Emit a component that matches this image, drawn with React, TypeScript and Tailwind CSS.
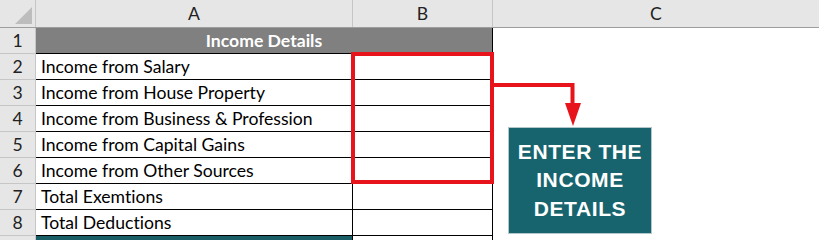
import React from 'react';

const rows = [
  'Income from Salary',
  'Income from House Property',
  'Income from Business & Profession',
  'Income from Capital Gains',
  'Income from Other Sources',
  'Total Exemtions',
  'Total Deductions',
];

function RowNum({ n }: { n?: number }) {
  return (
    <div className="w-[36px] shrink-0 flex items-center justify-center bg-[#e6e6e6] border-r border-b border-[#c6c6c6] text-[#222]">
      {n}
    </div>
  );
}

export default function App() {
  return (
    <div className="relative w-[819px] h-[240px] overflow-hidden bg-white font-['Lato',sans-serif] text-[17.6px] text-black leading-none [font-variant-ligatures:none]">
      {/* column headers */}
      <div className="flex h-[28px] bg-[#e6e6e6] border-b border-[#9d9d9d]">
        <div className="relative w-[36px] shrink-0 border-r border-[#c6c6c6]">
          <svg className="absolute right-[3px] bottom-[3px]" width="17" height="17" viewBox="0 0 17 17">
            <polygon points="17,0 17,17 0,17" fill="#bdbdbd" />
          </svg>
        </div>
        <div className="w-[317px] shrink-0 flex items-center justify-center border-r border-[#c6c6c6] text-[#222]">A</div>
        <div className="w-[140px] shrink-0 flex items-center justify-center border-r border-[#c6c6c6] text-[#222]">B</div>
        <div className="flex-1 flex items-center justify-center text-[#222]">C</div>
      </div>

      {/* row 1 */}
      <div className="flex h-[26px]">
        <RowNum n={1} />
        <div className="w-[457px] shrink-0 flex items-center justify-center bg-[#808080] border-r border-b border-black text-white font-bold">
          Income Details
        </div>
        <div className="flex-1" />
      </div>

      {rows.map((label, i) => (
        <div key={label} className="flex h-[26px]">
          <RowNum n={i + 2} />
          <div className="w-[317px] shrink-0 flex items-center pl-[5px] border-r border-b border-black">{label}</div>
          <div className="w-[140px] shrink-0 border-r border-b border-black" />
          <div className="flex-1" />
        </div>
      ))}

      {/* row 9, only its top edge is visible */}
      <div className="flex h-[26px]">
        <RowNum />
        <div className="w-[317px] shrink-0 bg-[#1b5f66] border-r border-black" />
        <div className="w-[140px] shrink-0 border-r border-black" />
        <div className="flex-1" />
      </div>

      {/* highlight around B2:B6 */}
      <div className="absolute left-[351px] top-[52px] w-[143px] h-[132px] border-[4px] border-[#e8141b]" />

      {/* connector arrow */}
      <svg className="absolute left-0 top-0" width="819" height="240">
        <polyline points="494,85 572.5,85 572.5,106" fill="none" stroke="#e8141b" strokeWidth="4" />
        <polygon points="565,103 581,103 573,126" fill="#e8141b" />
      </svg>

      {/* callout */}
      <div className="absolute left-[508px] top-[127px] w-[144px] h-[107px] flex flex-col items-center justify-center bg-[#17646e] border border-[#b3c7ca] font-['Liberation_Sans',sans-serif] font-bold text-white text-[21px] leading-[28.5px] tracking-[0.6px] text-center">
        <span>ENTER THE</span>
        <span>INCOME</span>
        <span>DETAILS</span>
      </div>
    </div>
  );
}
